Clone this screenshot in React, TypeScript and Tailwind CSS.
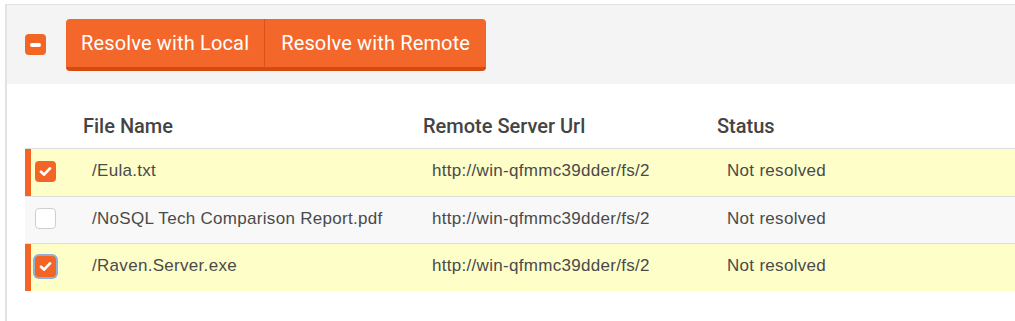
import React from "react";

type Row = {
  name: string;
  url: string;
  status: string;
  checked: boolean;
  focused?: boolean;
};

const rows: Row[] = [
  { name: "/Eula.txt", url: "http://win-qfmmc39dder/fs/2", status: "Not resolved", checked: true },
  { name: "/NoSQL Tech Comparison Report.pdf", url: "http://win-qfmmc39dder/fs/2", status: "Not resolved", checked: false },
  { name: "/Raven.Server.exe", url: "http://win-qfmmc39dder/fs/2", status: "Not resolved", checked: true, focused: true },
];

const CheckBox = ({ checked, focused }: { checked: boolean; focused?: boolean }) => {
  if (!checked) {
    return <div className="w-[21px] h-[21px] rounded-[4px] bg-white border border-[#cfcfcf]" />;
  }
  return (
    <div
      className={`w-[21px] h-[21px] rounded-[4px] bg-[#f26524] flex items-center justify-center ${
        focused ? "ring-2 ring-[#8fb0d8]" : ""
      }`}
    >
      <svg width="13" height="11" viewBox="0 0 13 11">
        <polyline
          points="2,5.8 5,8.6 11,2.4"
          fill="none"
          stroke="white"
          strokeWidth="2.8"
          strokeLinecap="round"
          strokeLinejoin="round"
        />
      </svg>
    </div>
  );
};

const App = () => {
  return (
    <div className="w-[1015px] h-[321px] bg-white pl-[5px] pt-[4px] overflow-hidden">
      <div className="h-full border-l-2 border-t border-[#e3e3e3]">
        {/* toolbar */}
        <div className="h-[79px] bg-[#f4f4f4] flex items-center pl-[18px] gap-[20px]">
          <div className="w-[21px] h-[21px] rounded-[4px] bg-[#f26524] flex items-center justify-center">
            <div className="w-[11px] h-[4px] rounded-[2px] bg-white" />
          </div>
          <div className="flex h-[52px] rounded-[4px] overflow-hidden border-b-4 border-[#d64a12] bg-[#f3672a] text-white text-[20px] tracking-[0.15px] font-['Roboto',sans-serif]">
            <button className="px-[15px] h-full border-r border-[#d9541a]">Resolve with Local</button>
            <button className="px-[16px] h-full">Resolve with Remote</button>
          </div>
        </div>

        {/* table */}
        <div className="ml-[18px]">
          <div className="h-[65px] flex items-end pb-[10px] border-b border-[#dedede] text-[20px] font-medium text-[#444] font-['Roboto',sans-serif]">
            <div className="w-[58px]" />
            <div className="w-[340px] leading-6">File Name</div>
            <div className="w-[294px] leading-6">Remote Server Url</div>
            <div className="leading-6">Status</div>
          </div>
          {rows.map((r, i) => (
            <div
              key={i}
              className={`flex items-center text-[17px] tracking-[0.3px] text-[#4a4a4a] font-['Liberation_Sans',Arial,sans-serif] ${
                r.checked ? "bg-[#fefec9]" : "bg-[#f8f8f8]"
              } ${i === 0 ? "h-[48px] border-b border-[#dedede]" : i === 1 ? "h-[47px] border-b border-[#dedede]" : "h-[47px]"}`}
            >
              <div className={`w-[58px] h-full flex items-center pb-[3px] ${r.checked ? "border-l-[6px] border-[#f26524] pl-[4px]" : "pl-[10px]"}`}>
                <CheckBox checked={r.checked} focused={r.focused} />
              </div>
              <div className="w-[340px] pl-[9px] pb-[3px]">{r.name}</div>
              <div className="w-[294px] pl-[9px] pb-[3px]">{r.url}</div>
              <div className="pl-[10px] pb-[3px]">{r.status}</div>
            </div>
          ))}
        </div>
      </div>
    </div>
  );
};

export default App;
